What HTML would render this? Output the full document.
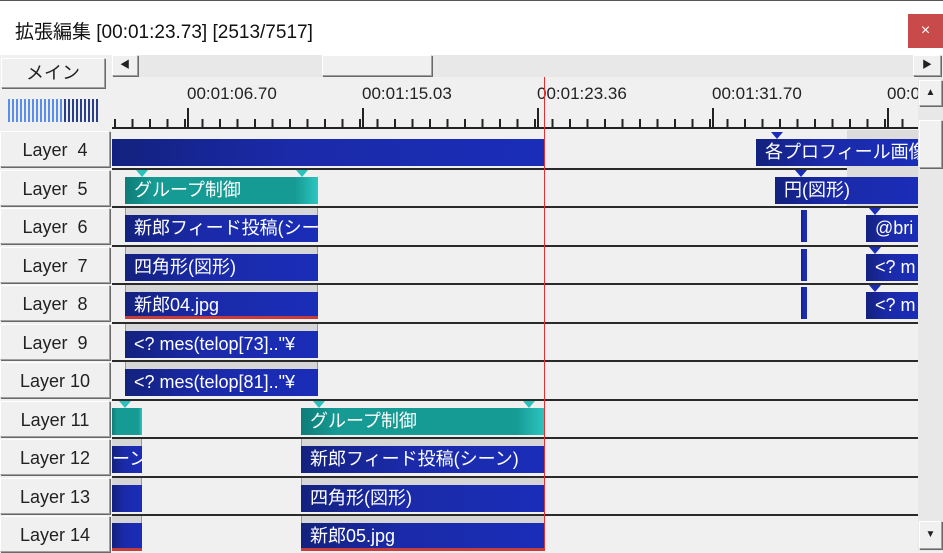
<!DOCTYPE html>
<html><head><meta charset="utf-8"><style>
*{margin:0;padding:0;box-sizing:border-box}
body{width:943px;height:551px;overflow:hidden;background:#f0f0f0;position:relative;font-family:"Liberation Sans","Noto Sans CJK JP",sans-serif}
.a{position:absolute}
.btn{position:absolute;background:#f0f0f0;border:1px solid;border-color:#fff #a0a0a0 #a0a0a0 #fff;box-shadow:1px 1px 0 #696969;font-size:18px;color:#222;text-align:center}
.row{position:absolute;left:112px;width:806px;height:39px;border-top:2px solid #2a2a2a}
.c{position:absolute;height:27px;color:#fff;font-size:18px;line-height:27px;padding-left:9px;white-space:nowrap;overflow:hidden;background:linear-gradient(90deg,#13217e,#1a2aa8 40%,#1a2db8)}
.t{background:linear-gradient(90deg,#0e7d78,#169a94 15%,#169a94 88%,#2cc6c0)}
.g{position:absolute;height:7px;background:#d6d6d6;border-left:1px solid #999;border-right:1px solid #999}
.tri{position:absolute;width:0;height:0;border-left:6px solid transparent;border-right:6px solid transparent;border-top:7px solid #2bc0bb}
.tb{border-top-color:#1a2db8}
.red{border-bottom:3px solid #c83c3c}
</style></head><body>
<div class="a" style="left:0;top:0;width:943px;height:55px;background:#fff;border-top:1px solid #555"></div>
<div class="a" style="left:15px;top:17px;font-size:19px;color:#111">拡張編集 [00:01:23.73] [2513/7517]</div>
<div class="a" style="left:908px;top:14px;width:35px;height:34px;background:#c84a4a;color:#fff;text-align:center;line-height:34px;font-size:16px">×</div>

<div class="btn" style="left:1px;top:58px;width:104px;height:30px;line-height:28px">メイン</div>
<div class="a" style="left:8px;top:99px;width:90px;height:23px;background:repeating-linear-gradient(90deg,#5a8ee8 0 2px,transparent 2px 4px)"></div>
<div class="a" style="left:64px;top:99px;width:34px;height:23px;background:repeating-linear-gradient(90deg,#2a3f8a 0 2px,#f0f0f0 2px 4px)"></div>

<div class="a" style="left:112px;top:55px;width:806px;height:22px;background:#e8e8e8"></div>
<div class="btn" style="left:112px;top:55px;width:26px;height:21px;font-size:10px;line-height:19px">◀</div>
<div class="btn" style="left:322px;top:55px;width:110px;height:21px"></div>
<div class="btn" style="left:913px;top:55px;width:28px;height:21px;font-size:10px;line-height:19px">▶</div>
<div class="a" style="left:918px;top:77px;width:25px;height:474px;background:#e8e8e8"></div>
<div class="btn" style="left:919px;top:80px;width:23px;height:26px;font-size:10px;line-height:24px">▲</div>
<div class="btn" style="left:919px;top:120px;width:23px;height:48px"></div>
<div class="btn" style="left:919px;top:521px;width:23px;height:28px;font-size:10px;line-height:26px">▼</div>

<div class="a" style="left:112px;top:77px;width:806px;height:53px;background:#f0f0f0"></div>
<div class="a" style="left:187px;top:84px;font-size:17px;color:#222">00:01:06.70</div>
<div class="a" style="left:362px;top:84px;font-size:17px;color:#222">00:01:15.03</div>
<div class="a" style="left:537px;top:84px;font-size:17px;color:#222">00:01:23.36</div>
<div class="a" style="left:712px;top:84px;font-size:17px;color:#222">00:01:31.70</div>
<div class="a" style="left:887px;top:84px;font-size:17px;color:#222;width:31px;overflow:hidden;white-space:nowrap">00:01:40</div>
<div class="a" style="left:112px;top:119px;width:806px;height:9px;background:repeating-linear-gradient(90deg,transparent 0 2px,#222 2px 4px,transparent 4px 17.5px)"></div>
<div class="a" style="left:112px;top:108px;width:806px;height:20px;background:repeating-linear-gradient(90deg,transparent 0 75px,#222 75px 77px,transparent 77px 175px)"></div>
<div class="a" style="left:112px;top:127px;width:806px;height:2px;background:#222"></div>

<div class="row" style="top:168px"></div>
<div class="row" style="top:206px"></div>
<div class="row" style="top:245px"></div>
<div class="row" style="top:283px"></div>
<div class="row" style="top:322px"></div>
<div class="row" style="top:360px"></div>
<div class="row" style="top:399px"></div>
<div class="row" style="top:437px"></div>
<div class="row" style="top:476px"></div>
<div class="row" style="top:514px"></div>

<div class="btn" style="left:0;top:131px;width:110px;height:36px;line-height:36px">Layer&nbsp; 4</div>
<div class="btn" style="left:0;top:170px;width:110px;height:36px;line-height:36px">Layer&nbsp; 5</div>
<div class="btn" style="left:0;top:208px;width:110px;height:36px;line-height:36px">Layer&nbsp; 6</div>
<div class="btn" style="left:0;top:247px;width:110px;height:36px;line-height:36px">Layer&nbsp; 7</div>
<div class="btn" style="left:0;top:285px;width:110px;height:36px;line-height:36px">Layer&nbsp; 8</div>
<div class="btn" style="left:0;top:324px;width:110px;height:36px;line-height:36px">Layer&nbsp; 9</div>
<div class="btn" style="left:0;top:362px;width:110px;height:36px;line-height:36px">Layer 10</div>
<div class="btn" style="left:0;top:401px;width:110px;height:36px;line-height:36px">Layer 11</div>
<div class="btn" style="left:0;top:439px;width:110px;height:36px;line-height:36px">Layer 12</div>
<div class="btn" style="left:0;top:478px;width:110px;height:36px;line-height:36px">Layer 13</div>
<div class="btn" style="left:0;top:516px;width:110px;height:36px;line-height:36px">Layer 14</div>

<div class="a" style="left:847px;top:130px;width:71px;height:76px;background:#dcdcdc"></div>

<div class="c" style="left:112px;top:139px;width:433px"></div>
<div class="c" style="left:756px;top:139px;width:162px">各プロフィール画像</div>
<div class="tri tb" style="left:771px;top:132px"></div>
<div class="c t" style="left:125px;top:177px;width:193px">グループ制御</div>
<div class="tri" style="left:136px;top:170px"></div>
<div class="tri" style="left:296px;top:170px"></div>
<div class="c" style="left:775px;top:177px;width:143px">円(図形)</div>
<div class="tri tb" style="left:795px;top:170px"></div>

<div class="g" style="left:125px;top:208px;width:193px"></div>
<div class="c" style="left:125px;top:215px;width:193px">新郎フィード投稿(シーン)</div>
<div class="c" style="left:801px;top:210px;width:6px;height:32px;padding:0"></div>
<div class="c" style="left:866px;top:215px;width:52px">@bri</div>
<div class="tri tb" style="left:869px;top:208px"></div>

<div class="g" style="left:125px;top:247px;width:193px"></div>
<div class="c" style="left:125px;top:254px;width:193px">四角形(図形)</div>
<div class="c" style="left:801px;top:249px;width:6px;height:32px;padding:0"></div>
<div class="c" style="left:866px;top:254px;width:52px">&lt;? m</div>
<div class="tri tb" style="left:869px;top:247px"></div>

<div class="g" style="left:125px;top:285px;width:193px"></div>
<div class="c red" style="left:125px;top:292px;width:193px">新郎04.jpg</div>
<div class="c" style="left:801px;top:287px;width:6px;height:32px;padding:0"></div>
<div class="c" style="left:866px;top:292px;width:52px">&lt;? m</div>
<div class="tri tb" style="left:869px;top:285px"></div>

<div class="g" style="left:125px;top:324px;width:193px"></div>
<div class="c" style="left:125px;top:331px;width:193px">&lt;? mes(telop[73].."¥</div>
<div class="g" style="left:125px;top:362px;width:193px"></div>
<div class="c" style="left:125px;top:369px;width:193px">&lt;? mes(telop[81].."¥</div>

<div class="c t" style="left:112px;top:408px;width:30px"></div>
<div class="tri" style="left:119px;top:401px"></div>
<div class="c t" style="left:301px;top:408px;width:244px">グループ制御</div>
<div class="tri" style="left:313px;top:401px"></div>
<div class="tri" style="left:523px;top:401px"></div>
<div class="g" style="left:112px;top:439px;width:30px;border-left:0"></div>
<div class="c" style="left:112px;top:446px;width:30px;padding-left:0">ーン)</div>
<div class="g" style="left:301px;top:439px;width:244px"></div>
<div class="c" style="left:301px;top:446px;width:244px">新郎フィード投稿(シーン)</div>
<div class="g" style="left:112px;top:478px;width:30px;border-left:0"></div>
<div class="c" style="left:112px;top:485px;width:30px"></div>
<div class="g" style="left:301px;top:478px;width:244px"></div>
<div class="c" style="left:301px;top:485px;width:244px">四角形(図形)</div>
<div class="g" style="left:112px;top:516px;width:30px;border-left:0"></div>
<div class="c red" style="left:112px;top:523px;width:30px;height:28px"></div>
<div class="g" style="left:301px;top:516px;width:244px"></div>
<div class="c red" style="left:301px;top:523px;width:244px;height:28px">新郎05.jpg</div>

<div class="a" style="left:544px;top:77px;width:1px;height:474px;background:#e03030"></div>
</body></html>
